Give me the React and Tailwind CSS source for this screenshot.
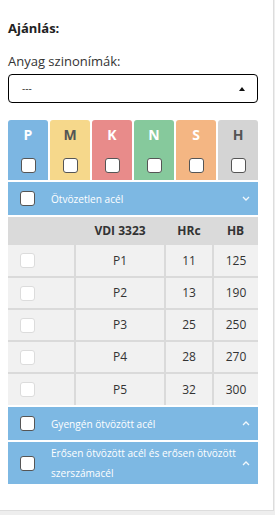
import React from 'react';

const tabs = [
  { letter: 'P', bg: 'bg-[#7cb6e2]', text: 'text-white' },
  { letter: 'M', bg: 'bg-[#f6d88b]', text: 'text-[#555]' },
  { letter: 'K', bg: 'bg-[#e88b8a]', text: 'text-white' },
  { letter: 'N', bg: 'bg-[#86c99c]', text: 'text-white' },
  { letter: 'S', bg: 'bg-[#f4b683]', text: 'text-white' },
  { letter: 'H', bg: 'bg-[#d4d4d4]', text: 'text-[#555]' },
];

const rows = [
  ['P1', '11', '125'],
  ['P2', '13', '190'],
  ['P3', '25', '250'],
  ['P4', '28', '270'],
  ['P5', '32', '300'],
];

const Box = ({ light }) => (
  <span
    className={`block w-[15px] h-[15px] rounded-[3px] bg-white border ${
      light ? 'border-[#dcdcdc]' : 'border-[#555]'
    }`}
  />
);

const Chevron = ({ up }) => (
  <svg width="8" height="5" viewBox="0 0 8 5" className="text-white/90">
    <path
      d={up ? 'M1 4 L4 1 L7 4' : 'M1 1 L4 4 L7 1'}
      fill="none"
      stroke="currentColor"
      strokeWidth="1.3"
    />
  </svg>
);

const GroupBar = ({ label, up }) => (
  <div className="flex items-center bg-[#7db8e3] min-h-[33px] py-[1px]">
    <div className="pl-[12px] pr-[16px]">
      <Box />
    </div>
    <div className="flex-1 text-[10.1px] leading-[20px] text-white">{label}</div>
    <div className="pr-[8px]">
      <Chevron up={up} />
    </div>
  </div>
);

const App = () => {
  return (
    <div className="min-h-screen bg-[#eeeeee]" style={{ fontFamily: '"Open Sans", sans-serif' }}>
      <div className="w-[274px] h-[511px] bg-white border-r border-b border-[#dddddd] pl-[8px] pt-[20px]">
        <div className="w-[250px]">
          {/* Heading */}
          <h3 className="text-[13px] font-bold text-[#222] leading-[16px]">Ajánlás:</h3>

          <label className="block mt-[17px] text-[13px] text-[#333] leading-[16px]">Anyag szinonímák:</label>

          {/* Select */}
          <div className="mt-[5px] h-[29px] w-[250px] rounded-[4px] border border-black flex items-center justify-between pl-[13px] pr-[12px]">
            <span className="text-[10px] text-[#333]">---</span>
            <svg width="6" height="4" viewBox="0 0 6 4">
              <path d="M0 4 L3 0 L6 4 Z" fill="#111" />
            </svg>
          </div>

          {/* Material tabs */}
          <div className="mt-[17px] flex gap-[2px]">
            {tabs.map((t) => (
              <div
                key={t.letter}
                className={`w-[40px] h-[60px] rounded-t-[3px] ${t.bg} flex flex-col items-center pt-[6px]`}
              >
                <span className={`text-[14px] font-bold leading-[18px] ${t.text}`}>{t.letter}</span>
                <span className="mt-[14px]">
                  <Box />
                </span>
              </div>
            ))}
          </div>

          {/* Groups */}
          <div className="mt-[2px]">
            <GroupBar label="Ötvözetlen acél" />

            <table className="w-[250px] mt-[2px] border-collapse text-[12px] text-[#333]">
              <thead>
                <tr className="bg-[#dadada] h-[28px]">
                  <th className="w-[67px]"></th>
                  <th className="w-[90px] font-bold text-center">VDI 3323</th>
                  <th className="w-[48px] font-bold text-center">HRc</th>
                  <th className="font-bold text-center">HB</th>
                </tr>
              </thead>
              <tbody>
                {rows.map((r) => (
                  <tr key={r[0]} className="bg-[#f1f1f1] h-[32px] border-b-2 border-[#dadada] last:border-b-0">
                    <td className="pl-[12px]">
                      <Box light />
                    </td>
                    <td className="text-center border-l-2 border-[#dadada]">{r[0]}</td>
                    <td className="text-center border-l-2 border-[#dadada]">{r[1]}</td>
                    <td className="text-center border-l-2 border-[#dadada]">{r[2]}</td>
                  </tr>
                ))}
              </tbody>
            </table>

            <div className="mt-[2px]">
              <GroupBar label="Gyengén ötvözött acél" up />
            </div>
            <div className="mt-[2px]">
              <GroupBar label="Erősen ötvözött acél és erősen ötvözött szerszámacél" up />
            </div>
          </div>
        </div>
      </div>
    </div>
  );
};

export default App;
